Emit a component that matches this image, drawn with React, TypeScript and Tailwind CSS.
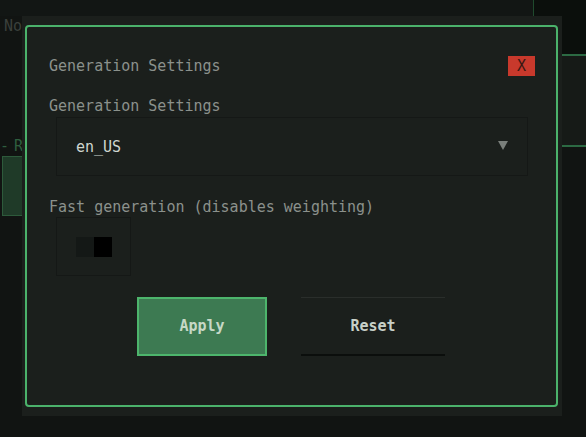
import React, { useState } from 'react';

const mono = "font-['DejaVu_Sans_Mono','Liberation_Mono',monospace]";

function Toggle({ on, onChange }: { on: boolean; onChange: (v: boolean) => void }) {
  return (
    <button
      type="button"
      onClick={() => onChange(!on)}
      className="flex h-[59px] w-[75px] items-center justify-start border border-[#151816] pl-[19px]"
    >
      <span className="flex h-[20px] w-[36px]">
        <span className={on ? 'w-1/2 bg-[#3d7a52]' : 'w-1/2 bg-[#141816]'} />
        <span className="w-1/2 bg-black" />
      </span>
    </button>
  );
}

function SettingsDialog() {
  const [locale, setLocale] = useState('en_US');
  const [fast, setFast] = useState(false);

  return (
    <div className="absolute left-[22px] top-[16px] h-[400px] w-[540px] bg-[#1b1f1c] pb-[9px] pl-[3px] pr-[4px] pt-[9px]">
      <div className="flex h-full flex-col rounded-[4px] border-2 border-[#4bb26b] pl-[22px] pr-[21px] pt-[29px]">
        <div className="flex h-[20px] items-center justify-between">
          <h2 className="text-[15px] leading-[20px] text-[#8b918c]">Generation Settings</h2>
          <button
            type="button"
            className="flex h-[20px] w-[27px] items-center justify-center bg-[#c8392c] text-[15px] leading-none text-[#3a1712]"
          >
            X
          </button>
        </div>

        <label className="mt-[21px] text-[15px] leading-[19px] text-[#8b918c]">Generation Settings</label>
        <div
          className="ml-[7px] mt-[1px] flex h-[59px] w-[472px] items-center justify-between border border-[#151816] pl-[19px] pr-[19px]"
          onClick={() => setLocale(locale === 'en_US' ? 'de_DE' : 'en_US')}
        >
          <span className="text-[15px] leading-[20px] text-[#cfd6cf]">{locale}</span>
          <svg width="10" height="9" viewBox="0 0 10 9" className="mt-[-2px]">
            <polygon points="0,0 10,0 5,9" fill="#7a7f7b" />
          </svg>
        </div>

        <label className="mt-[22px] text-[15px] leading-[19px] text-[#8b918c]">
          Fast generation (disables weighting)
        </label>
        <div className="ml-[7px]">
          <Toggle on={fast} onChange={setFast} />
        </div>

        <div className="mt-[21px] flex gap-[34px] pl-[88px]">
          <button
            type="button"
            className="flex h-[59px] w-[130px] items-center justify-center border-2 border-[#4db56c] bg-[#3d7a52] text-[15px] font-bold text-[#c6d8c6]"
          >
            Apply
          </button>
          <button
            type="button"
            className="flex h-[59px] w-[144px] items-center justify-center border-b-2 border-t border-b-[#0b0e0c] border-t-[#2a2e2b] text-[15px] font-bold text-[#c8d0c8]"
          >
            Reset
          </button>
        </div>
      </div>
    </div>
  );
}

export default function App() {
  return (
    <div className={`relative h-[437px] w-[586px] overflow-hidden bg-[#111412] ${mono}`}>
      <div className="flex h-full">
        <div className="flex flex-1 flex-col">
          <div className="h-[16px] bg-[#121614]" />
          <p className="pl-[4px] text-[15px] leading-[20px] text-[#3b403c]">No presets saved yet</p>
          <p className="mt-[100px] whitespace-pre text-[15px] leading-[20px] tracking-[-2px] text-[#2f5e3e]">- R</p>
          <div className="ml-[2px] h-[60px] w-[400px] border border-[#2d5a3b] bg-[#1f3a28]" />
        </div>
        <div className="flex w-[53px] flex-col">
          <div className="h-[56px] border-b-2 border-l border-b-[#2c6a43] border-l-[#1f4a2d] bg-[#0b0f0c]" />
          <div className="h-[91px] border-b-2 border-b-[#2c6a43] bg-[#161a17]" />
          <div className="flex-1" />
        </div>
      </div>
      <SettingsDialog />
    </div>
  );
}
